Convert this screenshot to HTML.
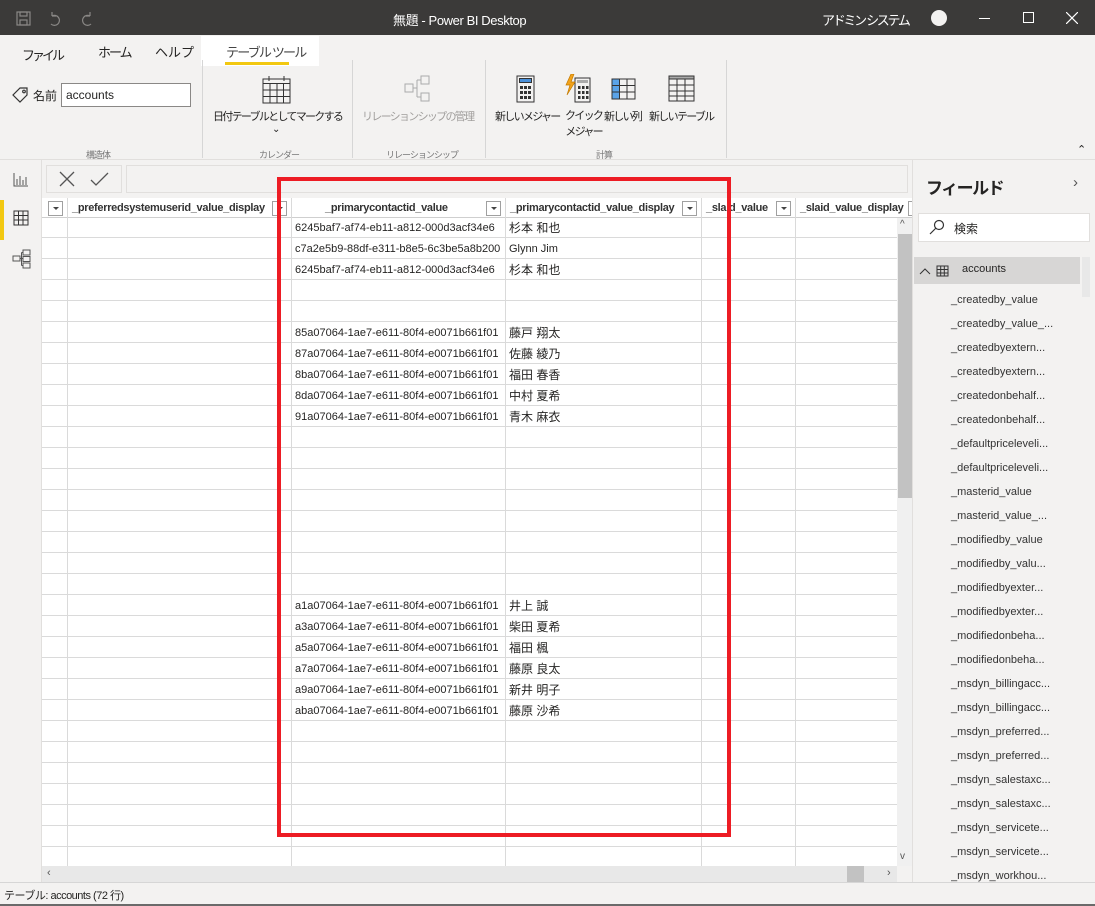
<!DOCTYPE html>
<html><head><meta charset="utf-8"><style>
*{margin:0;padding:0;box-sizing:border-box}
body{width:1095px;height:906px;position:relative;overflow:hidden;background:#f3f2f1;font-family:"Liberation Sans","Noto Sans CJK JP",sans-serif;color:#252423}
.a{position:absolute;white-space:nowrap}
.t{font-size:11px}
.k{letter-spacing:-1.7px}
.s{font-size:11px}
.cell{position:absolute;font-size:11px;line-height:21px;white-space:nowrap}
.dd{position:absolute;top:201px;width:15px;height:15px;border:1px solid #a0a0a0;background:#fff}
.dd:after{content:"";position:absolute;left:4px;top:5px;border-left:3px solid transparent;border-right:3px solid transparent;border-top:3px solid #444}
.h{position:absolute;top:198px;height:20px;line-height:20px;font-size:11px;font-weight:bold;color:#333;letter-spacing:-0.3px}
.f{position:absolute;left:951px;font-size:11px;color:#333}
.vs{position:absolute;top:60px;width:1px;height:98px;background:#d6d6d6}
.gl{position:absolute;font-size:9px;color:#777;top:148px;letter-spacing:-1px}
</style></head><body>
<!-- title bar -->
<div class="a" style="left:0;top:0;width:1095px;height:35px;background:#3b3a39"></div>
<svg class="a" style="left:16px;top:11px" width="80" height="16" viewBox="0 0 80 16" fill="none" stroke="#8a8886" stroke-width="1.2">
<rect x="1" y="1" width="13" height="13"/><rect x="4" y="1" width="7" height="4"/><rect x="4" y="9" width="7" height="5"/>
<path d="M36 5 a5 5 0 1 1 -1 8 M36 5 l0 -4 M36 5 l4 0"/>
<path d="M74 5 a5 5 0 1 0 1 8 M74 5 l0 -4 M74 5 l-4 0"/>
</svg>
<div class="a" style="left:393px;top:10px;color:#fff;font-size:13px;letter-spacing:-0.4px">無題 - Power BI Desktop</div>
<div class="a" style="left:822px;top:10px;color:#fff;font-size:13px;letter-spacing:-2.3px">アドミン システム</div>
<div class="a" style="left:931px;top:10px;width:16px;height:16px;border-radius:50%;background:#f3f2f1"></div>
<div class="a" style="left:979px;top:18px;width:11px;height:1px;background:#fff"></div>
<div class="a" style="left:1023px;top:12px;width:11px;height:11px;border:1px solid #fff"></div>
<svg class="a" style="left:1066px;top:12px" width="12" height="12"><path d="M0 0L12 12M12 0L0 12" stroke="#fff" stroke-width="1.2"/></svg>
<!-- tabs -->
<div class="a" style="left:22px;top:45px;font-size:13px;letter-spacing:-3px">ファイル</div>
<div class="a" style="left:98px;top:42px;font-size:13px;letter-spacing:-2px">ホーム</div>
<div class="a" style="left:155px;top:42px;font-size:13px">ヘルプ</div>
<div class="a" style="left:201px;top:36px;width:118px;height:30px;background:#fff"></div>
<div class="a" style="left:226px;top:42px;font-size:13px;color:#444;letter-spacing:-1.8px">テーブル ツール</div>
<div class="a" style="left:225px;top:62px;width:64px;height:3px;background:#f2c811"></div>
<!-- ribbon -->
<svg class="a" style="left:12px;top:86px" width="18" height="18" fill="none" stroke="#333" stroke-width="1.2"><path d="M8 2h7v7l-7 7-7-7z"/><circle cx="12" cy="5.5" r="1.3"/></svg>
<div class="a" style="left:33px;top:87px;font-size:12px">名前</div>
<div class="a" style="left:61px;top:83px;width:130px;height:24px;border:1px solid #8a8886;background:#fff;padding:4px 4px;font-size:12px">accounts</div>
<div class="gl" style="left:86px">構造体</div>
<div class="vs" style="left:202px"></div>
<svg class="a" style="left:262px;top:75px" width="30" height="29" fill="none" stroke="#333" stroke-width="1"><rect x="1" y="4" width="27" height="24"/><path d="M1 8.5h27M1 15h27M1 21.5h27M8 8.5v20M15 8.5v20M21.5 8.5v20M7 1v5M22 1v5"/></svg>
<div class="a t k" style="left:213px;top:108px">日付テーブルとしてマークする</div>
<div class="a" style="left:272px;top:124px;font-size:10px">⌄</div>
<div class="gl" style="left:259px">カレンダー</div>
<div class="vs" style="left:352px"></div>
<svg class="a" style="left:402px;top:74px" width="32" height="30" fill="none" stroke="#aaa" stroke-width="1"><rect x="3" y="10" width="8" height="8"/><rect x="19" y="2" width="8" height="8"/><rect x="19" y="19" width="8" height="8"/><path d="M11 14h4M15 6v17M15 6h4M15 23h4"/></svg>
<div class="a t k" style="left:362px;top:108px;color:#a19f9d">リレーションシップの管理</div>
<div class="gl" style="left:386px">リレーションシップ</div>
<div class="vs" style="left:485px"></div>
<svg class="a" style="left:514px;top:74px" width="210" height="30" fill="none" stroke="#333" stroke-width="1">
<rect x="3" y="2" width="17" height="26"/><rect x="5.5" y="4.5" width="12" height="4" fill="#4a90d9" stroke="#333"/>
<g fill="#333" stroke="none"><rect x="6" y="12" width="3" height="3"/><rect x="10" y="12" width="3" height="3"/><rect x="14" y="12" width="3" height="3"/><rect x="6" y="17" width="3" height="3"/><rect x="10" y="17" width="3" height="3"/><rect x="14" y="17" width="3" height="3"/><rect x="6" y="22" width="3" height="3"/><rect x="10" y="22" width="3" height="3"/><rect x="14" y="22" width="3" height="3"/></g>
<rect x="61" y="4" width="15" height="24"/><rect x="63" y="6" width="11" height="3" fill="#aaa" stroke="none"/>
<g fill="#333" stroke="none"><rect x="64" y="12" width="2.5" height="3"/><rect x="68" y="12" width="2.5" height="3"/><rect x="72" y="12" width="2.5" height="3"/><rect x="64" y="17" width="2.5" height="3"/><rect x="68" y="17" width="2.5" height="3"/><rect x="72" y="17" width="2.5" height="3"/><rect x="64" y="22" width="2.5" height="3"/><rect x="68" y="22" width="2.5" height="3"/><rect x="72" y="22" width="2.5" height="3"/></g>
<path d="M57 0l-5 11h4l-3 10 8-13h-4l3-8z" fill="#f2a31b" stroke="#c47a00" stroke-width="0.7"/>
<rect x="98" y="5" width="23" height="20"/><rect x="98.5" y="5.5" width="7" height="19" fill="#5aa3e8" stroke="none"/><path d="M98 11.5h23M98 18h23M105.5 5v20M113 5v20"/>
<rect x="155" y="2" width="25" height="25"/><rect x="155" y="2" width="25" height="3" fill="#aaa"/><path d="M155 11h25M155 17h25M155 22h25M163 5v22M171 5v22"/>
</svg>
<div class="a t k" style="left:495px;top:108px">新しいメジャー</div>
<div class="a t k" style="left:565px;top:108px;line-height:16px;text-align:center">クイック<br>メジャー</div>
<div class="a t k" style="left:604px;top:108px">新しい列</div>
<div class="a t k" style="left:649px;top:108px">新しいテーブル</div>
<div class="gl" style="left:596px">計算</div>
<div class="vs" style="left:726px"></div>
<div class="a" style="left:1077px;top:143px;font-size:11px">⌃</div>
<div class="a" style="left:0;top:159px;width:1095px;height:1px;background:#e1dfdd"></div>
<!-- left nav -->
<div class="a" style="left:41px;top:160px;width:1px;height:723px;background:#e1dfdd"></div>
<svg class="a" style="left:13px;top:171px" width="16" height="16" fill="none" stroke="#555" stroke-width="1"><path d="M1 2v13h14M4 14V8M7 14V5M10 14V9M13 14V6"/></svg>
<div class="a" style="left:0;top:200px;width:4px;height:40px;background:#f2c811"></div>
<svg class="a" style="left:13px;top:210px" width="16" height="16" fill="none" stroke="#333" stroke-width="1"><rect x="1" y="1" width="14" height="14"/><path d="M1 5.5h14M1 10h14M5.5 1v14M10 1v14"/></svg>
<svg class="a" style="left:12px;top:249px" width="20" height="20" fill="none" stroke="#555" stroke-width="1"><rect x="1" y="7" width="7" height="5"/><rect x="11" y="1" width="7" height="5"/><rect x="11" y="7.5" width="7" height="5"/><rect x="11" y="14" width="7" height="5"/><path d="M8 9.5h3M9.5 3.5v13M9.5 3.5h1.5M9.5 16.5h1.5"/></svg>
<!-- formula bar -->
<div class="a" style="left:46px;top:165px;width:76px;height:28px;border:1px solid #e1dfdd;background:#f3f2f1"></div>
<svg class="a" style="left:59px;top:171px" width="52" height="16" fill="none" stroke="#555" stroke-width="1.3"><path d="M1 1l14 14M15 1L1 15M32 9l5 5 12-12"/></svg>
<div class="a" style="left:126px;top:165px;width:782px;height:28px;border:1px solid #e1dfdd;background:#f3f2f1"></div>
<!-- grid -->
<div class="a" style="left:42px;top:198px;width:870px;height:668px;background:#fff"></div>
<div class="a" style="left:42px;top:217px;width:855px;height:649px;background:repeating-linear-gradient(to bottom,transparent 0,transparent 20px,#dadada 20px,#dadada 21px)"></div>
<div class="a" style="left:42px;top:217px;width:870px;height:1px;background:#cfcfcf"></div>
<div class="a" style="left:67px;top:198px;width:1px;height:668px;background:#dadada"></div>
<div class="a" style="left:291px;top:198px;width:1px;height:668px;background:#dadada"></div>
<div class="a" style="left:505px;top:198px;width:1px;height:668px;background:#dadada"></div>
<div class="a" style="left:701px;top:198px;width:1px;height:668px;background:#dadada"></div>
<div class="a" style="left:795px;top:198px;width:1px;height:668px;background:#dadada"></div>
<div class="dd" style="left:48px"></div>
<div class="h" style="left:72px">_preferredsystemuserid_value_display</div>
<div class="dd" style="left:272px"></div>
<div class="h" style="left:325px">_primarycontactid_value</div>
<div class="dd" style="left:486px"></div>
<div class="h" style="left:510px">_primarycontactid_value_display</div>
<div class="dd" style="left:682px"></div>
<div class="h" style="left:706px">_slaid_value</div>
<div class="dd" style="left:776px"></div>
<div class="h" style="left:800px">_slaid_value_display</div>
<div class="a" style="left:908px;top:201px;width:4px;height:15px;border:1px solid #a0a0a0;border-right:none;background:#fff"></div>
<!-- data -->
<div class="cell" style="left:295px;top:218px">6245baf7-af74-eb11-a812-000d3acf34e6</div><div class="cell" style="left:509px;top:218px;font-size:12px">杉本 和也</div>
<div class="cell" style="left:295px;top:239px">c7a2e5b9-88df-e311-b8e5-6c3be5a8b200</div><div class="cell" style="left:509px;top:239px">Glynn Jim</div>
<div class="cell" style="left:295px;top:260px">6245baf7-af74-eb11-a812-000d3acf34e6</div><div class="cell" style="left:509px;top:260px;font-size:12px">杉本 和也</div>
<div class="cell" style="left:295px;top:323px">85a07064-1ae7-e611-80f4-e0071b661f01</div><div class="cell" style="left:509px;top:323px;font-size:12px">藤戸 翔太</div>
<div class="cell" style="left:295px;top:344px">87a07064-1ae7-e611-80f4-e0071b661f01</div><div class="cell" style="left:509px;top:344px;font-size:12px">佐藤 綾乃</div>
<div class="cell" style="left:295px;top:365px">8ba07064-1ae7-e611-80f4-e0071b661f01</div><div class="cell" style="left:509px;top:365px;font-size:12px">福田 春香</div>
<div class="cell" style="left:295px;top:386px">8da07064-1ae7-e611-80f4-e0071b661f01</div><div class="cell" style="left:509px;top:386px;font-size:12px">中村 夏希</div>
<div class="cell" style="left:295px;top:407px">91a07064-1ae7-e611-80f4-e0071b661f01</div><div class="cell" style="left:509px;top:407px;font-size:12px">青木 麻衣</div>
<div class="cell" style="left:295px;top:596px">a1a07064-1ae7-e611-80f4-e0071b661f01</div><div class="cell" style="left:509px;top:596px;font-size:12px">井上 誠</div>
<div class="cell" style="left:295px;top:617px">a3a07064-1ae7-e611-80f4-e0071b661f01</div><div class="cell" style="left:509px;top:617px;font-size:12px">柴田 夏希</div>
<div class="cell" style="left:295px;top:638px">a5a07064-1ae7-e611-80f4-e0071b661f01</div><div class="cell" style="left:509px;top:638px;font-size:12px">福田 楓</div>
<div class="cell" style="left:295px;top:659px">a7a07064-1ae7-e611-80f4-e0071b661f01</div><div class="cell" style="left:509px;top:659px;font-size:12px">藤原 良太</div>
<div class="cell" style="left:295px;top:680px">a9a07064-1ae7-e611-80f4-e0071b661f01</div><div class="cell" style="left:509px;top:680px;font-size:12px">新井 明子</div>
<div class="cell" style="left:295px;top:701px">aba07064-1ae7-e611-80f4-e0071b661f01</div><div class="cell" style="left:509px;top:701px;font-size:12px">藤原 沙希</div>
<!-- scrollbars -->
<div class="a" style="left:897px;top:218px;width:15px;height:648px;background:#f0f0f0"></div>
<div class="a" style="left:898px;top:234px;width:14px;height:264px;background:#c2c2c2"></div>
<div class="a" style="left:900px;top:219px;font-size:10px;color:#555">^</div>
<div class="a" style="left:900px;top:851px;font-size:10px;color:#555">v</div>
<div class="a" style="left:42px;top:866px;width:855px;height:16px;background:#e8e8e8"></div>
<div class="a" style="left:847px;top:866px;width:17px;height:16px;background:#c2c2c2"></div>
<div class="a" style="left:47px;top:867px;font-size:11px;color:#555">‹</div>
<div class="a" style="left:887px;top:867px;font-size:11px;color:#555">›</div>
<!-- red box -->
<div class="a" style="left:277px;top:177px;width:454px;height:660px;border:4px solid #ed1c24"></div>
<!-- right pane -->
<div class="a" style="left:912px;top:160px;width:1px;height:723px;background:#e1dfdd"></div>
<div class="a" style="left:926px;top:174px;font-size:17px;font-weight:bold;color:#252423;letter-spacing:-1.5px">フィールド</div>
<div class="a" style="left:1073px;top:174px;font-size:15px;color:#555">›</div>
<div class="a" style="left:918px;top:213px;width:172px;height:29px;border:1px solid #e1dfdd;background:#fff"></div>
<svg class="a" style="left:929px;top:219px" width="16" height="16" fill="none" stroke="#333" stroke-width="1.2"><circle cx="10" cy="6" r="4.5"/><path d="M7 9L1 15"/></svg>
<div class="a" style="left:954px;top:220px;font-size:12px">検索</div>
<div class="a" style="left:914px;top:257px;width:166px;height:27px;background:#d7d6d5"></div>
<div class="a" style="left:1082px;top:257px;width:8px;height:40px;background:#e8e8e8"></div>
<svg class="a" style="left:919px;top:265px" width="36" height="12" fill="none" stroke="#333" stroke-width="1"><path d="M1 9l5-5 5 5"/><rect x="18" y="1" width="11" height="10"/><path d="M18 4.5h11M18 8h11M21.7 1v10M25.3 1v10"/></svg>
<div class="a s" style="left:962px;top:263px">accounts</div>
<div class="f" style="top:294px">_createdby_value</div>
<div class="f" style="top:318px">_createdby_value_...</div>
<div class="f" style="top:342px">_createdbyextern...</div>
<div class="f" style="top:366px">_createdbyextern...</div>
<div class="f" style="top:390px">_createdonbehalf...</div>
<div class="f" style="top:414px">_createdonbehalf...</div>
<div class="f" style="top:438px">_defaultpriceleveli...</div>
<div class="f" style="top:462px">_defaultpriceleveli...</div>
<div class="f" style="top:486px">_masterid_value</div>
<div class="f" style="top:510px">_masterid_value_...</div>
<div class="f" style="top:534px">_modifiedby_value</div>
<div class="f" style="top:558px">_modifiedby_valu...</div>
<div class="f" style="top:582px">_modifiedbyexter...</div>
<div class="f" style="top:606px">_modifiedbyexter...</div>
<div class="f" style="top:630px">_modifiedonbeha...</div>
<div class="f" style="top:654px">_modifiedonbeha...</div>
<div class="f" style="top:678px">_msdyn_billingacc...</div>
<div class="f" style="top:702px">_msdyn_billingacc...</div>
<div class="f" style="top:726px">_msdyn_preferred...</div>
<div class="f" style="top:750px">_msdyn_preferred...</div>
<div class="f" style="top:774px">_msdyn_salestaxc...</div>
<div class="f" style="top:798px">_msdyn_salestaxc...</div>
<div class="f" style="top:822px">_msdyn_servicete...</div>
<div class="f" style="top:846px">_msdyn_servicete...</div>
<div class="f" style="top:870px;height:12px;overflow:hidden">_msdyn_workhou...</div>
<!-- status -->
<div class="a" style="left:0;top:882px;width:1095px;height:1px;background:#d6d6d6"></div>
<div class="a" style="left:0;top:883px;width:1095px;height:23px;background:#f3f2f1"></div>
<div class="a s" style="left:4px;top:887px;letter-spacing:-0.5px">テーブル: accounts (72 行)</div>
<div class="a" style="left:0;top:904px;width:1095px;height:2px;background:#6a6a6a"></div>
</body></html>
